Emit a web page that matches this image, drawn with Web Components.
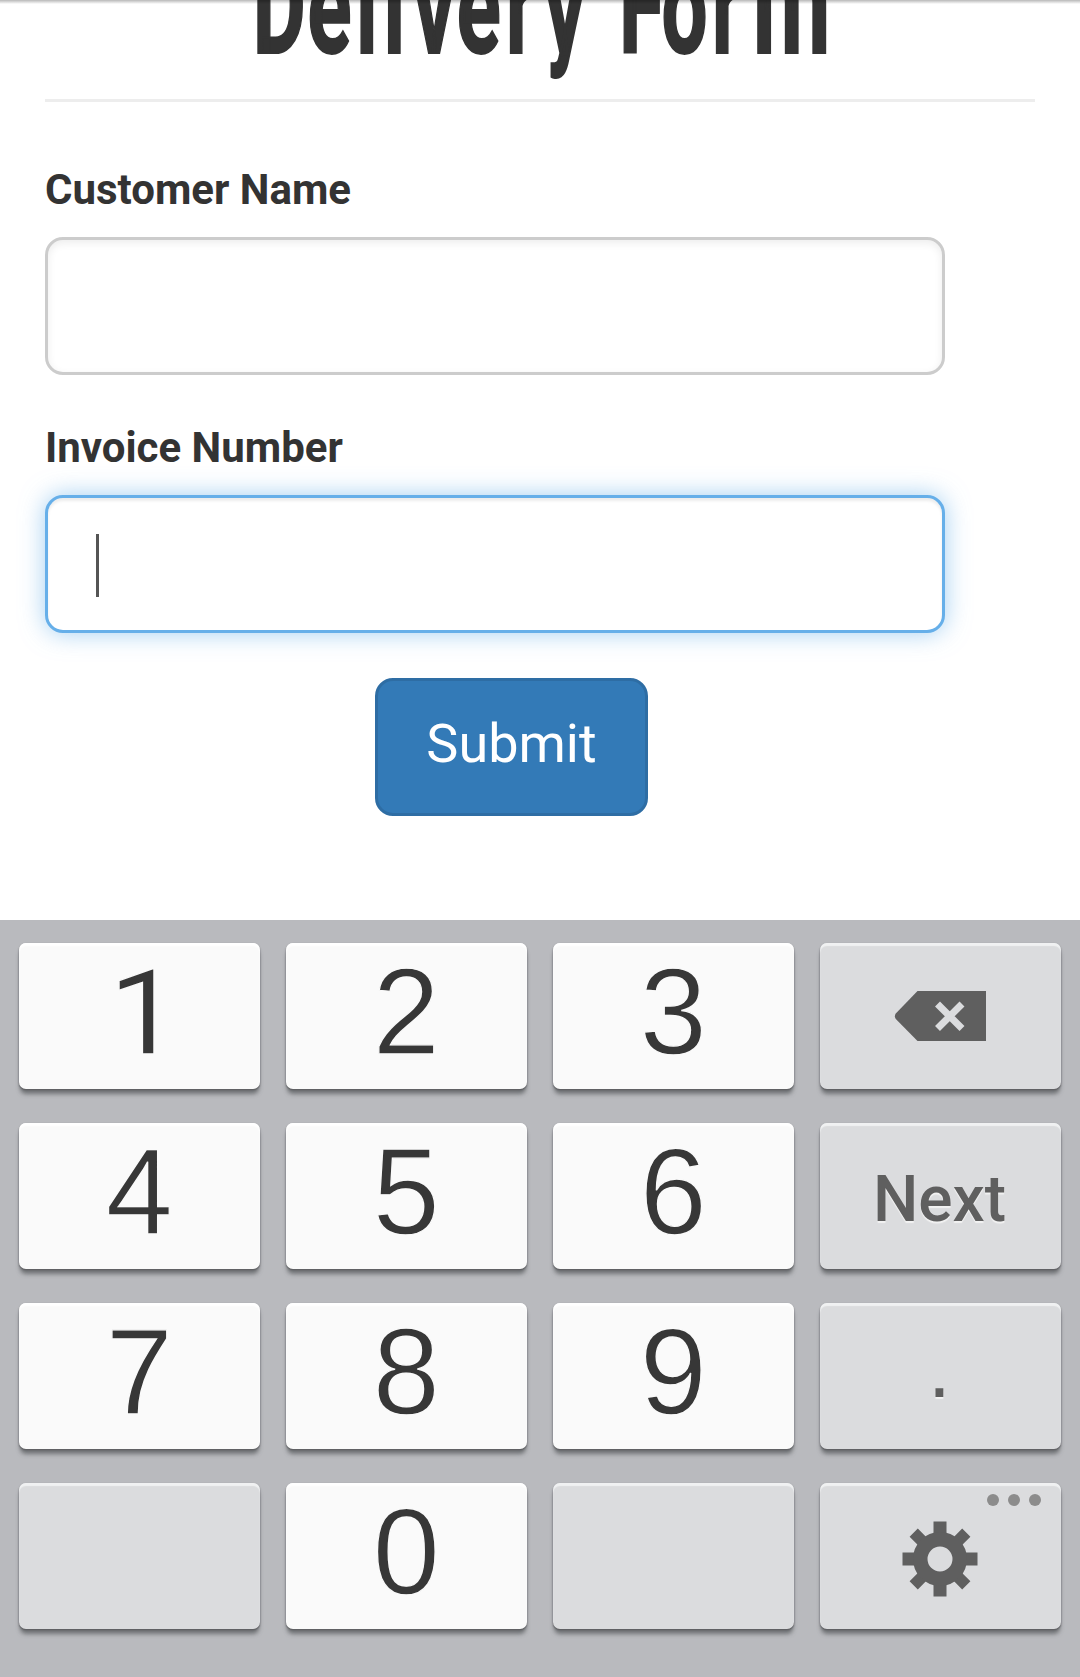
<!DOCTYPE html>
<html lang="en">
<head>
<meta charset="utf-8">
<title>Delivery Form</title>
<style>
html,body{margin:0;padding:0;background:#fff;overflow:hidden}
body{width:1080px;height:1677px;font-family:Roboto,"Liberation Sans",sans-serif;color:#333}
</style>
</head>
<body>
<delivery-page>
  <form-heading slot="heading"></form-heading>
  <text-field label="Customer Name"></text-field>
  <text-field label="Invoice Number" active></text-field>
  <submit-button>Submit</submit-button>
  <key-pad slot="keyboard">
    <pad-key glyph="one">1</pad-key><pad-key>2</pad-key><pad-key>3</pad-key><pad-key kind="fn"><backspace-icon></backspace-icon></pad-key>
    <pad-key>4</pad-key><pad-key>5</pad-key><pad-key>6</pad-key><pad-key kind="fn">Next</pad-key>
    <pad-key>7</pad-key><pad-key>8</pad-key><pad-key>9</pad-key><pad-key kind="fn" glyph="dot">.</pad-key>
    <pad-key kind="fn"></pad-key><pad-key>0</pad-key><pad-key kind="fn"></pad-key><pad-key kind="fn" more><gear-icon></gear-icon></pad-key>
  </key-pad>
</delivery-page>
<script>
const define = (name, html) => customElements.define(name, class extends HTMLElement {
  constructor() {
    super();
    this.attachShadow({ mode: 'open' }).innerHTML = html;
  }
  connectedCallback() {
    const label = this.shadowRoot.querySelector('label');
    if (label) label.textContent = this.getAttribute('label');
  }
});

define('delivery-page', `
<style>
:host{display:flex;flex-direction:column;width:1080px;height:1677px;overflow:hidden}
main{box-sizing:border-box;height:920px;flex:none;padding:0 45px;background:#fff;display:flex;flex-direction:column}
.fields{display:flex;flex-direction:column;width:900px;padding-top:60px}
.shade{position:absolute;left:0;top:0;width:1080px;height:4px;background:linear-gradient(rgba(0,0,0,.28),rgba(0,0,0,0))}
</style>
<main><slot name="heading"></slot><div class="fields"><slot></slot></div></main>
<slot name="keyboard"></slot>
<div class="shade"></div>`);

define('form-heading', `
<style>
:host{display:block;height:99px;border-bottom:3px solid #ededed}
svg{display:block;font:700 136px Roboto,"Liberation Sans",sans-serif;fill:#333;stroke:#333;stroke-width:2px}
.tail{font-size:114px;stroke-width:4px}
.wide{font-size:149px}
</style>
<svg width="990" height="99" viewBox="45 0 990 99">
<text transform="scale(.6 1)" y="53" x="421.300 512.500 593.300 639.300 689.300 761.200 843.300 913 983 1031.700 1102.500 1186.700 1255">Deliver<tspan class="tail">y</tspan> For<tspan class="wide">m</tspan></text>
</svg>`);

define('text-field', `
<style>
:host{display:flex;flex-direction:column;margin-bottom:45px}
label{font-size:42px;font-weight:700;line-height:55px;height:55px;margin-bottom:20px;white-space:nowrap}
.box{box-sizing:border-box;height:138px;border:3px solid #ccc;border-radius:18px;background:#fff;box-shadow:inset 0 3px 9px rgba(0,0,0,.075);display:flex;align-items:center;padding:0 48px}
i{display:none;width:3px;height:63px;background:#555;margin-top:3px}
:host([active]) .box{border-color:#66afe9;box-shadow:inset 0 3px 3px rgba(0,0,0,.075),0 0 24px rgba(102,175,233,.6)}
:host([active]) i{display:block}
</style>
<label></label><div class="box"><i></i></div>`);

define('submit-button', `
<style>
:host{display:block;align-self:flex-start;margin-left:330px}
button{display:block;box-sizing:border-box;width:273px;height:138px;border:3px solid #2e6da4;border-radius:18px;background:#337ab7;color:#fff;font:400 54px/72px Roboto,"Liberation Sans",sans-serif;padding:0 0 6px;text-align:center}
</style>
<button><slot></slot></button>`);

define('key-pad', `
<style>
:host{display:grid;box-sizing:border-box;height:757px;flex:none;background:#b9babe;padding:23px 19px 0;grid-template-columns:repeat(4,241px);grid-auto-rows:146px;column-gap:26px;row-gap:34px;align-content:start}
</style>
<slot></slot>`);

define('pad-key', `
<style>
:host{display:flex;position:relative;box-sizing:border-box;justify-content:center;align-items:center;border-radius:7px;background:#fafafa;color:#373737;font-family:"Liberation Sans",Arial,sans-serif;font-size:123px;font-weight:400;line-height:138px;
box-shadow:inset 0 3px 2px #fff,0 1px 1px #606164,0 6px 4px -1px rgba(80,82,86,.7),0 1px 2px rgba(70,72,78,.45)}
:host([kind]){background:#dbdcde;color:#5f5f5f;font-family:Roboto,sans-serif;font-size:64px;font-weight:500;line-height:75px;text-shadow:0 2px 1px #f2f2f2;
box-shadow:inset 0 3px 1px #f0f1f2,0 1px 1px #606164,0 6px 4px -1px rgba(80,82,86,.7),0 1px 2px rgba(70,72,78,.45)}
.cap{display:block;position:relative;top:-4px;transform:scaleX(.98);-webkit-text-stroke:1.300px #fafafa}
:host([kind]) .cap{top:3px;left:-1px;transform:none;-webkit-text-stroke:0}
:host([glyph=one]){font-family:Roboto,sans-serif;font-size:119px}
:host([glyph=one]) .cap{top:-2px;left:5px;transform:scaleX(1.08)}
:host([glyph=dot]){font-family:"Liberation Sans",sans-serif;font-size:82px;font-weight:400}
:host([glyph=dot]) .cap{top:-8px}
.more{display:none;position:absolute;right:20px;top:11px;gap:9px}
.more b{width:12px;height:12px;border-radius:50%;background:#8c8c8c}
:host([more]) .more{display:flex}
</style>
<span class="cap"><slot></slot></span><div class="more"><b></b><b></b><b></b></div>`);

define('backspace-icon', `
<style>:host,svg{display:block}:host{margin-top:-6px}</style>
<svg width="92" height="50" viewBox="0 0 92 50"><path d="M23.500 0H92V50H23.500L1.800 28Q0 25 1.800 22.500Z" fill="#5f5f5f"/><path d="M43.500 13 68 37.500M68 13 43.500 37.500" stroke="#dbdcde" stroke-width="7"/></svg>`);

define('gear-icon', `
<style>:host,svg{display:block}</style>
<svg width="76" height="76" viewBox="-38 -38 76 76"><g stroke="#5f5f5f"><path d="M0-37.500V-20M0 37.500V20M-37.500 0H-20M37.500 0H20" stroke-width="13"/><path d="M26.300-26.300 14-14M26.300 26.300 14 14M-26.300 26.300-14 14M-26.300-26.300-14-14" stroke-width="11.600"/><circle r="19.750" fill="none" stroke-width="14.500"/></g></svg>`);
</script>
</body>
</html>
